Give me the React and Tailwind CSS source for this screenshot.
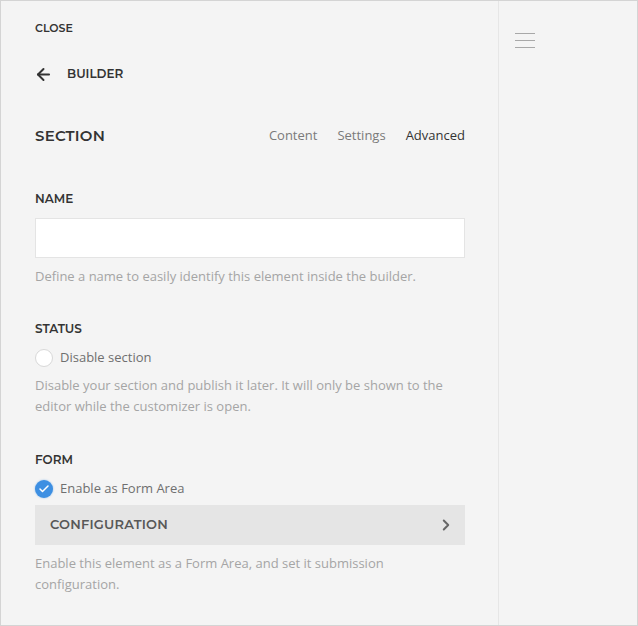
import { ArrowLeft, ChevronRight, Check } from 'lucide-react'

const head = "font-['Montserrat','Inter','Liberation_Sans',sans-serif]"
const body = "font-['Open_Sans','Liberation_Sans',sans-serif]"

function Label({ children }) {
  return <div className={`${head} text-[12px] font-semibold uppercase text-[#333] leading-[16px]`}>{children}</div>
}

function Help({ children }) {
  return <p className={`${body} text-[13px] leading-[21px] text-[#a5a5a5]`}>{children}</p>
}

export default function App() {
  return (
    <div className="w-[638px] h-[626px] bg-[#f4f4f4] border border-[#d4d4d4] flex overflow-hidden">
      {/* Main panel */}
      <div className="w-[498px] border-r border-[#e6e6e6] pl-[34px] pr-[33px] flex flex-col">
        <div className={`${head} mt-[20px] text-[11px] font-semibold text-[#333] leading-[14px]`}>CLOSE</div>

        <div className="mt-[29px] flex items-center gap-[14px] h-[20px]">
          <ArrowLeft size={19} strokeWidth={2.5} className="text-[#333] -ml-[1px]" />
          <span className={`${head} text-[12px] font-semibold text-[#333]`}>BUILDER</span>
        </div>

        <div className="mt-[42px] flex items-center justify-between h-[20px]">
          <span className={`${head} text-[15px] font-semibold text-[#333] tracking-[0.2px]`}>SECTION</span>
          <div className={`${body} flex gap-[20px] text-[13px]`}>
            <span className="text-[#7a7a7a]">Content</span>
            <span className="text-[#7a7a7a]">Settings</span>
            <span className="text-[#333]">Advanced</span>
          </div>
        </div>

        {/* Name */}
        <div className="mt-[45px]">
          <Label>NAME</Label>
          <div className="mt-[11px] h-[40px] bg-white border border-[#e4e4e4]" />
          <div className="mt-[8px]"><Help>Define a name to easily identify this element inside the builder.</Help></div>
        </div>

        {/* Status */}
        <div className="mt-[34px]">
          <Label>STATUS</Label>
          <div className="mt-[12px] flex items-center gap-[7px] h-[18px]">
            <span className="w-[18px] h-[18px] rounded-full bg-white border border-[#d8d8d8]" />
            <span className={`${body} text-[13px] text-[#6f6f6f]`}>Disable section</span>
          </div>
          <div className="mt-[8px]">
            <Help>Disable your section and publish it later. It will only be shown to the editor while the customizer is open.</Help>
          </div>
        </div>

        {/* Form */}
        <div className="mt-[35px]">
          <Label>FORM</Label>
          <div className="mt-[12px] flex items-center gap-[7px] h-[18px]">
            <span className="w-[18px] h-[18px] rounded-full bg-[#3d8fe2] flex items-center justify-center shadow-[0_0_2px_rgba(61,143,226,0.6)]">
              <Check size={12} strokeWidth={3} className="text-white" />
            </span>
            <span className={`${body} text-[13px] text-[#6f6f6f]`}>Enable as Form Area</span>
          </div>
          <div className="mt-[7px] h-[40px] bg-[#e5e5e5] flex items-center justify-between pl-[15px] pr-[10px]">
            <span className={`${head} text-[13px] font-semibold text-[#585858] tracking-[0.2px]`}>CONFIGURATION</span>
            <ChevronRight size={18} strokeWidth={2.6} className="text-[#666]" />
          </div>
          <div className="mt-[8px]">
            <Help>Enable this element as a Form Area, and set it submission<br />configuration.</Help>
          </div>
        </div>
      </div>

      {/* Side rail */}
      <div className="flex-1 pl-[16px] pt-[32px]">
        <div className="w-[20px] flex flex-col gap-[6px]">
          <span className="h-px bg-[#a8a8a8]" />
          <span className="h-px bg-[#a8a8a8]" />
          <span className="h-px bg-[#a8a8a8]" />
        </div>
      </div>
    </div>
  )
}
